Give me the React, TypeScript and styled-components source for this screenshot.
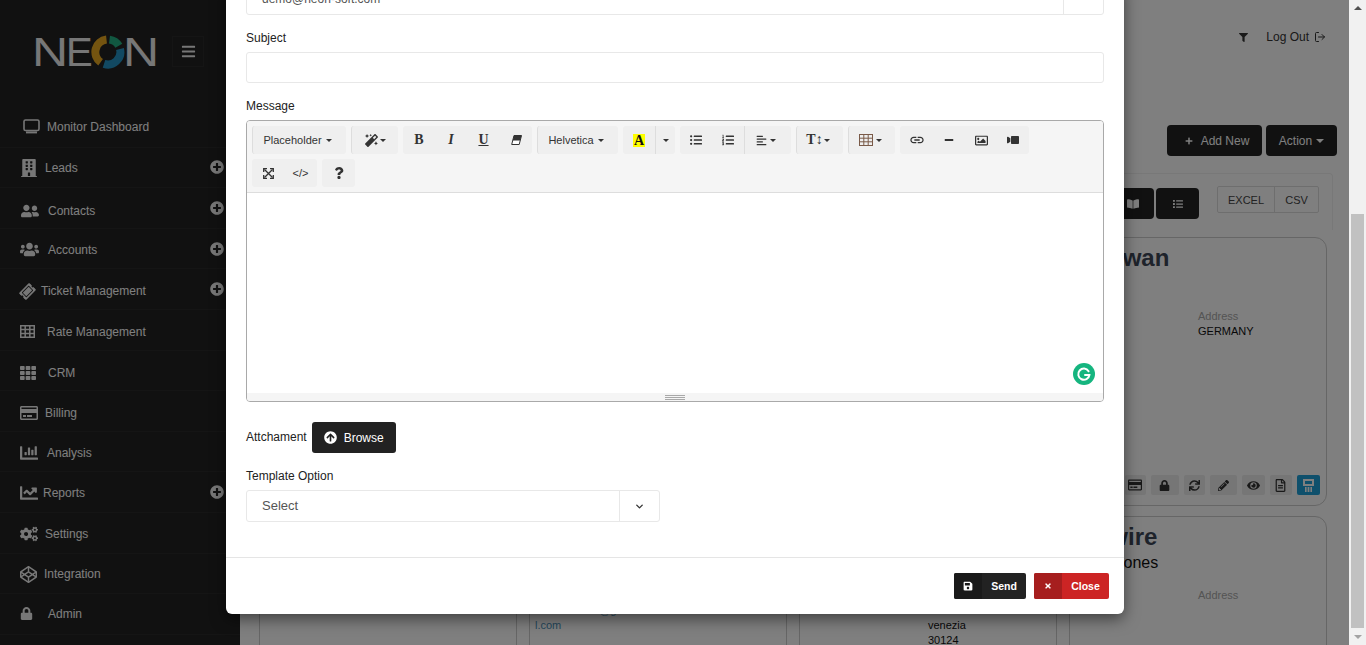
import React from "react";
import styled, { createGlobalStyle } from "styled-components";
import {
  FaAlignLeft,
  FaArrowCircleUp,
  FaBars,
  FaBookOpen,
  FaBuilding,
  FaChartBar,
  FaChartLine,
  FaCodepen,
  FaCogs,
  FaEye,
  FaFilter,
  FaList,
  FaListOl,
  FaListUl,
  FaLock,
  FaMagic,
  FaMinus,
  FaPencilAlt,
  FaPlus,
  FaPlusCircle,
  FaQuestion,
  FaRegCreditCard,
  FaRegFileAlt,
  FaRegImage,
  FaSave,
  FaSync,
  FaTh,
  FaTicketAlt,
  FaTimes,
  FaUpload,
  FaUserFriends,
  FaUsers,
  FaVideo,
} from "react-icons/fa";
import { FiChevronDown, FiLogOut } from "react-icons/fi";
import { MdLink } from "react-icons/md";

const GlobalStyle = createGlobalStyle`
  html, body {
    margin: 0;
    padding: 0;
    overflow: hidden;
    background: #fff;
    font-family: "Liberation Sans", Arial, sans-serif;
  }
  * { box-sizing: border-box; }
`;

const Screen = styled.div`
  display: flex;
  width: 1366px;
  height: 645px;
  overflow: hidden;
`;

const Stage = styled.div`
  position: relative;
  flex: 1;
  display: flex;
  min-width: 0;
  overflow: hidden;
`;

/* sidebar */
const Sidebar = styled.aside`
  width: 240px;
  flex-shrink: 0;
  background: #222;
  color: #fff;
  overflow: hidden;
`;

const LogoRow = styled.div`
  display: flex;
  align-items: center;
  height: 107px;
  padding: 0 0 4px 32px;
`;

const Logo = styled.div`
  display: flex;
  align-items: center;
  width: 140px;
  font-size: 40px;
  line-height: 40px;
  color: #eee;
`;

const LogoLetter = styled.span<{ $w: number; $stretch?: number }>`
  display: block;
  flex-shrink: 0;
  width: ${(p) => p.$w}px;
  transform: scaleX(${(p) => p.$stretch ?? 1});
  transform-origin: left center;
`;

const Burger = styled.button`
  display: flex;
  align-items: center;
  justify-content: center;
  width: 32px;
  height: 31px;
  background: transparent;
  border: 1px solid #2b2b2b;
  color: #eee;
  font-size: 15px;
  padding: 0;
`;

const NavRow = styled.div<{ $nudge?: number }>`
  display: flex;
  align-items: center;
  height: 40.6px;
  padding: ${(p) => p.$nudge ?? 0}px 16px 0 20px;
  border-bottom: 1px solid #2a2a2a;
  font-size: 12px;
  color: #fff;
`;

const NavIcon = styled.span<{ $slot: number; $size?: number; $inset?: number; $tilt?: number }>`
  display: flex;
  align-items: center;
  width: ${(p) => p.$slot}px;
  flex-shrink: 0;
  padding-left: ${(p) => p.$inset ?? 0}px;
  font-size: ${(p) => p.$size ?? 17}px;
  color: #eee;
  svg {
    transform: rotate(${(p) => p.$tilt ?? 0}deg);
  }
`;

const NavExpand = styled.span<{ $nudge?: number }>`
  display: flex;
  margin-left: auto;
  margin-top: ${(p) => -(p.$nudge ?? 0)}px;
  font-size: 14px;
  color: #eee;
`;

/* page behind the dialog */
const Main = styled.main`
  flex: 1;
  min-width: 0;
  padding: 0 12px 0 19px;
  background: #fff;
`;

const TopBar = styled.div`
  display: flex;
  align-items: center;
  justify-content: flex-end;
  gap: 18px;
  height: 74px;
  padding-right: 11px;
  font-size: 12px;
  color: #333;
`;

const LogOut = styled.span`
  display: flex;
  align-items: center;
  gap: 5px;
  font-size: 12px;
`;

const ActionRow = styled.div`
  display: flex;
  justify-content: flex-end;
  gap: 4px;
  margin-top: 51px;
`;

const DarkButton = styled.button<{ $w: number; $gap?: number; $indent?: number }>`
  display: flex;
  align-items: center;
  justify-content: center;
  gap: ${(p) => p.$gap ?? 8}px;
  width: ${(p) => p.$w}px;
  height: 31px;
  padding: 0 0 0 ${(p) => p.$indent ?? 0}px;
  border: 0;
  border-radius: 4px;
  background: #222;
  color: #fff;
  font: 12px "Liberation Sans", Arial, sans-serif;
`;

const Caret = styled.span<{ $size?: number; $color?: string }>`
  display: inline-block;
  width: 0;
  height: 0;
  border-left: ${(p) => p.$size ?? 3}px solid transparent;
  border-right: ${(p) => p.$size ?? 3}px solid transparent;
  border-top: ${(p) => p.$size ?? 3}px solid ${(p) => p.$color ?? "#333"};
`;

const Panel = styled.div`
  display: flex;
  justify-content: flex-end;
  align-items: flex-start;
  height: 57px;
  margin: 17px 4px 0 0;
  padding: 12px 13px 0 0;
  border: 1px solid #f0f0f0;
  border-bottom: 0;
  border-radius: 4px 4px 0 0;
`;

const ViewSwitch = styled.div`
  display: flex;
  gap: 2px;
  margin-top: 2px;
`;

const ExportGroup = styled.div`
  display: flex;
  height: 27px;
  margin-left: 18px;
  border: 1px solid #ddd;
  border-radius: 2px;
`;

const ExportItem = styled.span<{ $w: number }>`
  display: flex;
  align-items: center;
  justify-content: center;
  width: ${(p) => p.$w}px;
  font-size: 11px;
  color: #444;
  & + & {
    border-left: 1px solid #ddd;
  }
`;

const CardGrid = styled.div`
  display: grid;
  grid-template-columns: repeat(4, 257.5px);
  grid-auto-rows: 269px;
  column-gap: 12.5px;
  row-gap: 10px;
  margin-top: 7px;
`;

const Card = styled.article`
  display: flex;
  flex-direction: column;
  padding: 6px 6px 10px 10px;
  border: 1px solid #ccc;
  border-radius: 12px;
`;

const CardTitle = styled.h3`
  min-height: 28px;
  margin: 0;
  font-size: 24px;
  line-height: 28px;
  font-weight: bold;
  white-space: nowrap;
  color: #3d4656;
`;

const CardSubtitle = styled.div`
  height: 24px;
  font-size: 16px;
  line-height: 24px;
  color: #111;
`;

const CardBody = styled.div`
  display: grid;
  grid-template-columns: 118px 1fr;
  margin-top: 13px;
  font-size: 11px;
  line-height: 15px;
  color: #111;
`;

const FieldCaption = styled.div`
  color: #a8a8a8;
`;

const MailText = styled.div`
  margin-left: -5px;
  color: #4a90b8;
`;

const CardActions = styled.div`
  display: flex;
  justify-content: flex-end;
  gap: 5px;
  margin-top: auto;
`;

const CardAction = styled.span<{ $w: number; $on?: boolean }>`
  display: flex;
  align-items: center;
  justify-content: center;
  width: ${(p) => p.$w}px;
  height: 20px;
  border-radius: 2px;
  background: ${(p) => (p.$on ? "#1fa0d8" : "#ececec")};
  color: ${(p) => (p.$on ? "#fff" : "#333")};
`;

/* dialog */
const Backdrop = styled.div`
  position: absolute;
  inset: 0;
  display: flex;
  align-items: flex-end;
  padding: 0 0 31px 226px;
  background: rgba(0, 0, 0, 0.5);
  overflow: hidden;
`;

const Dialog = styled.div`
  width: 898px;
  flex-shrink: 0;
  background: #fff;
  border-radius: 0 0 6px 6px;
  box-shadow: 0 5px 15px rgba(0, 0, 0, 0.5);
`;

const DialogBody = styled.div`
  padding: 0 20px 35px;
`;

const Field = styled.div`
  margin-bottom: 16px;
`;

const FieldLabel = styled.label`
  display: block;
  margin-bottom: 6px;
  font-size: 12px;
  line-height: 15px;
  color: #222;
`;

const TextBox = styled.div`
  height: 31px;
  padding-left: 15px;
  border: 1px solid #e8e8e8;
  border-radius: 3px;
  background: #fff;
  font-size: 12px;
  line-height: 29px;
  color: #555;
`;

const AddonBox = styled.div`
  display: flex;
  justify-content: space-between;
  height: 31px;
  border: 1px solid #e8e8e8;
  border-radius: 3px;
  font-size: 12px;
  line-height: 29px;
  color: #555;
  padding-left: 15px;
`;

const AddonEnd = styled.div`
  width: 40px;
  border-left: 1px solid #e8e8e8;
`;

const Editor = styled.div`
  border: 1px solid #a9a9a9;
  border-radius: 4px;
  overflow: hidden;
`;

const Toolbar = styled.div`
  display: flex;
  flex-wrap: wrap;
  gap: 5px;
  height: 72px;
  padding: 5px;
  background: #f5f5f5;
  border-bottom: 1px solid #ddd;
`;

const ToolGroup = styled.div<{ $edge?: boolean }>`
  display: flex;
  height: 28px;
  border-radius: 3px;
  background: #efefef;
  border-left: ${(p) => (p.$edge ? "1px solid #ddd" : "0")};
`;

const ToolButton = styled.span<{
  $w: number;
  $divided?: boolean;
  $serif?: boolean;
  $gap?: number;
  $trim?: number;
}>`
  display: flex;
  align-items: center;
  justify-content: center;
  gap: ${(p) => p.$gap ?? 4}px;
  width: ${(p) => p.$w}px;
  height: 28px;
  padding-right: ${(p) => p.$trim ?? 0}px;
  font-size: ${(p) => (p.$serif ? 14 : 11)}px;
  font-family: ${(p) =>
    p.$serif ? '"Liberation Serif", serif' : '"Liberation Sans", Arial, sans-serif'};
  color: #333;
  border-left: ${(p) => (p.$divided ? "1px solid #ddd" : "0")};
`;

const SerifMark = styled.span<{ $italic?: boolean; $under?: boolean }>`
  font-weight: bold;
  font-style: ${(p) => (p.$italic ? "italic" : "normal")};
  text-decoration: ${(p) => (p.$under ? "underline" : "none")};
`;

const ColorMark = styled.span`
  display: block;
  width: 12px;
  height: 13px;
  background: #ff0;
  color: #111;
  font: bold 14px/13px "Liberation Serif", serif;
  text-align: center;
`;

const Mirrored = styled.span`
  display: flex;
  transform: scaleX(-1);
`;

const EditArea = styled.div`
  position: relative;
  height: 200px;
  background: #fff;
`;

const Grammarly = styled.span`
  position: absolute;
  right: 8px;
  bottom: 8px;
  display: flex;
`;

const Statusbar = styled.div`
  display: flex;
  align-items: center;
  justify-content: center;
  height: 8px;
  background: #f5f5f5;
`;

const Grabber = styled.span`
  display: block;
  width: 20px;
  height: 5px;
  border-top: 1px solid #a9a9a9;
  border-bottom: 1px solid #a9a9a9;
  background: linear-gradient(#f5f5f5 1px, #a9a9a9 1px, #a9a9a9 2px, #f5f5f5 2px);
`;

const AttachRow = styled.div`
  display: flex;
  align-items: center;
  gap: 5px;
  margin: 20px 0 16px;
  font-size: 12px;
  color: #222;
`;

const AttachLabel = styled.span`
  margin-top: -2px;
`;

const BrowseButton = styled.button`
  display: flex;
  align-items: center;
  justify-content: center;
  gap: 7px;
  width: 84px;
  height: 31px;
  padding: 0;
  border: 0;
  border-radius: 3px;
  background: #222;
  color: #fff;
  font: 12px "Liberation Sans", Arial, sans-serif;
`;

const SelectBox = styled.div`
  display: flex;
  width: 414px;
  height: 32px;
  border: 1px solid #e8e8e8;
  border-radius: 3px;
  font-size: 13px;
  color: #555;
`;

const SelectValue = styled.div`
  flex: 1;
  padding-left: 15px;
  line-height: 29px;
`;

const SelectArrow = styled.div`
  display: flex;
  align-items: center;
  justify-content: center;
  width: 40px;
  border-left: 1px solid #e8e8e8;
  font-size: 11px;
  color: #333;
`;

const DialogFooter = styled.div`
  display: flex;
  justify-content: flex-end;
  gap: 8px;
  height: 57px;
  padding: 15px 15px 0 0;
  border-top: 1px solid #e5e5e5;
`;

const FooterButton = styled.button<{ $w: number; $bg: string; $shade: string }>`
  display: flex;
  width: ${(p) => p.$w}px;
  height: 26px;
  padding: 0;
  border: 0;
  border-radius: 2px;
  overflow: hidden;
  background: ${(p) => p.$bg};
  color: #fff;
  font: bold 10.5px/26px "Liberation Sans", Arial, sans-serif;
  > span:first-child {
    background: ${(p) => p.$shade};
  }
`;

const FooterIcon = styled.span`
  display: flex;
  align-items: center;
  justify-content: center;
  width: 28px;
  height: 26px;
`;

const FooterLabel = styled.span`
  flex: 1;
  text-align: center;
`;

/* scrollbar, drawn because the page itself does not scroll */
const ScrollTrack = styled.div`
  display: flex;
  flex-direction: column;
  align-items: center;
  width: 17px;
  flex-shrink: 0;
  background: #f1f1f1;
`;

const ScrollArrow = styled.span<{ $up?: boolean }>`
  display: block;
  width: 0;
  height: 0;
  margin: 6px 0;
  border-left: 4px solid transparent;
  border-right: 4px solid transparent;
  border-bottom: ${(p) => (p.$up ? "4px solid #505050" : "0")};
  border-top: ${(p) => (p.$up ? "0" : "4px solid #a3a3a3")};
`;

const ScrollThumb = styled.div`
  width: 13px;
  height: 414px;
  margin-top: 198px;
  margin-bottom: auto;
  background: #c1c1c1;
`;

const MonitorIcon = () => (
  <svg width="17" height="15" viewBox="0 0 17 15" fill="none">
    <rect x="1" y="1" width="15" height="10.5" rx="1.5" stroke="currentColor" strokeWidth="1.6" />
    <rect x="3" y="12.4" width="11" height="2" fill="currentColor" />
  </svg>
);

const LogoDonut = () => (
  <svg width="34" height="34" viewBox="0 0 34 34" fill="none" style={{ flexShrink: 0, marginRight: -2 }}>
    <path d="M15.5 4.6A12.5 12.5 0 0 0 9.6 27.2" stroke="#e9a820" strokeWidth="8" />
    <path d="M18.5 4.6A12.5 12.5 0 0 1 27.8 10.8" stroke="#23b083" strokeWidth="8" />
    <path d="M29 14A12.5 12.5 0 0 1 13 28.9" stroke="#2493c4" strokeWidth="8" />
  </svg>
);

const RateTableIcon = () => (
  <svg width="15" height="13" viewBox="0 0 15 13" fill="none" stroke="currentColor" strokeWidth="1.5">
    <rect x="0.75" y="0.75" width="13.5" height="11.5" />
    <path d="M0.75 4.6H14.25M0.75 8.4H14.25M5.2 0.75V12.25M9.8 0.75V12.25" />
  </svg>
);

const GridIcon = () => (
  <svg width="14" height="12" viewBox="0 0 14 12" fill="none" stroke="#7a5a48" strokeWidth="1">
    <rect x="0.5" y="0.5" width="13" height="11" />
    <path d="M0.5 4.2H13.5M0.5 7.8H13.5M4.8 0.5V11.5M9.2 0.5V11.5" />
  </svg>
);

const EraserIcon = () => (
  <svg width="11" height="10" viewBox="0 0 11 10">
    <path d="M3 0.5H10.5L8.2 9.5H0.7Z" fill="#fff" stroke="#333" strokeWidth="1" />
    <path d="M3 0.5H10.5L9.2 5.5H1.7Z" fill="#333" />
  </svg>
);

const ExpandIcon = () => (
  <svg width="11" height="11" viewBox="0 0 11 11" fill="none" stroke="#333" strokeWidth="1.3">
    <path d="M1.5 1.5L9.5 9.5M9.5 1.5L1.5 9.5" />
    <path d="M0.7 4V0.7H4M7 0.7H10.3V4M10.3 7V10.3H7M4 10.3H0.7V7" />
  </svg>
);

const GrammarlyBadge = () => (
  <svg width="22" height="22" viewBox="0 0 22 22">
    <circle cx="11" cy="11" r="11" fill="#15b57f" />
    <path
      d="M15.6 8.2A5.6 5.6 0 1 0 16.4 12H12"
      fill="none"
      stroke="#fff"
      strokeWidth="2"
      strokeLinecap="round"
    />
  </svg>
);

const PrinterIcon = () => (
  <svg width="13" height="15" viewBox="0 0 13 15" fill="currentColor">
    <path d="M1 1h11v7H1z M3 3v3h7V3z" fillRule="evenodd" />
    <path d="M3 9h1.6v5H3zM5.6 9h1.8v5H5.6zM8.4 9H10v5H8.4z" />
  </svg>
);

type NavEntry = {
  label?: string;
  icon: React.ReactNode;
  slot: number;
  size?: number;
  inset?: number;
  nudge?: number;
  tilt?: number;
  expand?: boolean;
};

const navEntries: NavEntry[] = [
  { label: "Monitor Dashboard", icon: <MonitorIcon />, slot: 27, inset: 3 },
  { label: "Leads", icon: <FaBuilding />, slot: 25, size: 18, nudge: 2, expand: true },
  { label: "Contacts", icon: <FaUserFriends />, slot: 28, inset: 1, size: 18, nudge: 6, expand: true },
  { label: "Accounts", icon: <FaUsers />, slot: 28, size: 19, nudge: 2, expand: true },
  { label: "Ticket Management", icon: <FaTicketAlt />, slot: 21, size: 15, nudge: 4, tilt: -45, expand: true },
  { label: "Rate Management", icon: <RateTableIcon />, slot: 27, nudge: 4 },
  { label: "CRM", icon: <FaTh />, slot: 28, size: 16, nudge: 6 },
  { label: "Billing", icon: <FaRegCreditCard />, slot: 25, size: 18, nudge: 4 },
  { label: "Analysis", icon: <FaChartBar />, slot: 27, size: 18, nudge: 2 },
  { label: "Reports", icon: <FaChartLine />, slot: 23, size: 18, nudge: 2, expand: true },
  { label: "Settings", icon: <FaCogs />, slot: 25, size: 18, nudge: 2 },
  { label: "Integration", icon: <FaCodepen />, slot: 24, size: 17, nudge: 2 },
  { label: "Admin", icon: <FaLock />, slot: 28, size: 13 },
  { icon: <FaUpload />, slot: 28, size: 14, inset: 1 },
];

const cardActions: { w: number; on?: boolean; icon: React.ReactNode }[] = [
  { w: 21, icon: <FaRegCreditCard size={14} /> },
  { w: 28, icon: <FaLock size={11} /> },
  { w: 21, icon: <FaSync size={11} /> },
  { w: 27, icon: <FaPencilAlt size={11} /> },
  { w: 23, icon: <FaEye size={13} /> },
  { w: 22, icon: <FaRegFileAlt size={13} /> },
  { w: 23, on: true, icon: <PrinterIcon /> },
];

const App: React.FC = () => {
  return (
    <>
      <GlobalStyle />
      <Screen>
        <Stage>
          <Sidebar>
            <LogoRow>
              <Logo>
                <LogoLetter $w={34} $stretch={1.25}>
                  N
                </LogoLetter>
                <LogoLetter $w={25}>E</LogoLetter>
                <LogoDonut />
                <LogoLetter $w={33} $stretch={1.25}>
                  N
                </LogoLetter>
              </Logo>
              <Burger>
                <FaBars />
              </Burger>
            </LogoRow>
            {navEntries.map((entry, index) => (
              <NavRow key={index} $nudge={entry.nudge}>
                <NavIcon $slot={entry.slot} $size={entry.size} $inset={entry.inset} $tilt={entry.tilt}>
                  {entry.icon}
                </NavIcon>
                {entry.label}
                {entry.expand && (
                  <NavExpand $nudge={entry.nudge}>
                    <FaPlusCircle />
                  </NavExpand>
                )}
              </NavRow>
            ))}
          </Sidebar>

          <Main>
            <TopBar>
              <FaFilter size={9} />
              <LogOut>
                Log Out <FiLogOut size={12} />
              </LogOut>
            </TopBar>
            <ActionRow>
              <DarkButton $w={95} $indent={5}>
                <FaPlus size={8} /> Add New
              </DarkButton>
              <DarkButton $w={71} $gap={4}>
                Action <Caret $size={4} $color="#fff" />
              </DarkButton>
            </ActionRow>
            <Panel>
              <ViewSwitch>
                <DarkButton $w={43}>
                  <FaBookOpen size={12} />
                </DarkButton>
                <DarkButton $w={43}>
                  <FaList size={10} />
                </DarkButton>
              </ViewSwitch>
              <ExportGroup>
                <ExportItem $w={56}>EXCEL</ExportItem>
                <ExportItem $w={44}>CSV</ExportItem>
              </ExportGroup>
            </Panel>
            <CardGrid>
              <Card />
              <Card />
              <Card />
              <Card>
                <CardTitle>M Awan</CardTitle>
                <CardSubtitle />
                <CardBody>
                  <div />
                  <div>
                    <FieldCaption>Address</FieldCaption>
                    <div>GERMANY</div>
                  </div>
                </CardBody>
                <CardActions>
                  {cardActions.map((action, index) => (
                    <CardAction key={index} $w={action.w} $on={action.on}>
                      {action.icon}
                    </CardAction>
                  ))}
                </CardActions>
              </Card>
              <Card />
              <Card>
                <CardTitle />
                <CardSubtitle />
                <CardBody>
                  <div>
                    <FieldCaption>Email</FieldCaption>
                    <MailText>contact.sales@gmai</MailText>
                    <MailText>l.com</MailText>
                  </div>
                </CardBody>
              </Card>
              <Card>
                <CardTitle />
                <CardSubtitle />
                <CardBody>
                  <div />
                  <div>
                    <FieldCaption>Address</FieldCaption>
                    <div>Via Roma</div>
                    <div>venezia</div>
                    <div>30124</div>
                  </div>
                </CardBody>
              </Card>
              <Card>
                <CardTitle>Sawire</CardTitle>
                <CardSubtitle>Mrs. Jones</CardSubtitle>
                <CardBody>
                  <div />
                  <FieldCaption>Address</FieldCaption>
                </CardBody>
              </Card>
            </CardGrid>
          </Main>

          <Backdrop>
            <Dialog>
              <DialogBody>
                <Field>
                  <AddonBox>
                    demo@neon-soft.com
                    <AddonEnd />
                  </AddonBox>
                </Field>
                <Field>
                  <FieldLabel>Subject</FieldLabel>
                  <TextBox />
                </Field>
                <FieldLabel>Message</FieldLabel>
                <Editor>
                  <Toolbar>
                    <ToolGroup $edge>
                      <ToolButton $w={93} $trim={4}>
                        Placeholder <Caret />
                      </ToolButton>
                    </ToolGroup>
                    <ToolGroup $edge>
                      <ToolButton $w={46} $gap={2}>
                        <FaMagic size={13} /> <Caret />
                      </ToolButton>
                    </ToolGroup>
                    <ToolGroup>
                      <ToolButton $w={32} $serif>
                        <SerifMark>B</SerifMark>
                      </ToolButton>
                      <ToolButton $w={32} $serif>
                        <SerifMark $italic>I</SerifMark>
                      </ToolButton>
                      <ToolButton $w={33} $serif>
                        <SerifMark $under>U</SerifMark>
                      </ToolButton>
                      <ToolButton $w={32}>
                        <EraserIcon />
                      </ToolButton>
                    </ToolGroup>
                    <ToolGroup $edge>
                      <ToolButton $w={80} $trim={4}>
                        Helvetica <Caret />
                      </ToolButton>
                    </ToolGroup>
                    <ToolGroup>
                      <ToolButton $w={32}>
                        <ColorMark>A</ColorMark>
                      </ToolButton>
                      <ToolButton $w={20} $divided>
                        <Caret />
                      </ToolButton>
                    </ToolGroup>
                    <ToolGroup>
                      <ToolButton $w={32}>
                        <FaListUl size={12} />
                      </ToolButton>
                      <ToolButton $w={32}>
                        <FaListOl size={12} />
                      </ToolButton>
                      <ToolButton $w={47} $divided $gap={3} $trim={5}>
                        <FaAlignLeft size={11} /> <Caret />
                      </ToolButton>
                    </ToolGroup>
                    <ToolGroup $edge>
                      <ToolButton $w={46} $serif $gap={1} $trim={4}>
                        <SerifMark>T↕</SerifMark> <Caret />
                      </ToolButton>
                    </ToolGroup>
                    <ToolGroup $edge>
                      <ToolButton $w={46} $gap={3} $trim={4}>
                        <GridIcon /> <Caret />
                      </ToolButton>
                    </ToolGroup>
                    <ToolGroup>
                      <ToolButton $w={33}>
                        <MdLink size={16} />
                      </ToolButton>
                      <ToolButton $w={32}>
                        <FaMinus size={10} />
                      </ToolButton>
                      <ToolButton $w={32}>
                        <FaRegImage size={13} />
                      </ToolButton>
                      <ToolButton $w={32}>
                        <Mirrored>
                          <FaVideo size={12} />
                        </Mirrored>
                      </ToolButton>
                    </ToolGroup>
                    <ToolGroup>
                      <ToolButton $w={32}>
                        <ExpandIcon />
                      </ToolButton>
                      <ToolButton $w={33}>&lt;/&gt;</ToolButton>
                    </ToolGroup>
                    <ToolGroup>
                      <ToolButton $w={33}>
                        <FaQuestion size={12} />
                      </ToolButton>
                    </ToolGroup>
                  </Toolbar>
                  <EditArea>
                    <Grammarly>
                      <GrammarlyBadge />
                    </Grammarly>
                  </EditArea>
                  <Statusbar>
                    <Grabber />
                  </Statusbar>
                </Editor>
                <AttachRow>
                  <AttachLabel>Attchament</AttachLabel>
                  <BrowseButton>
                    <FaArrowCircleUp size={13} /> Browse
                  </BrowseButton>
                </AttachRow>
                <FieldLabel>Template Option</FieldLabel>
                <SelectBox>
                  <SelectValue>Select</SelectValue>
                  <SelectArrow>
                    <FiChevronDown strokeWidth={3} />
                  </SelectArrow>
                </SelectBox>
              </DialogBody>
              <DialogFooter>
                <FooterButton $w={72} $bg="#222" $shade="#1a1a1a">
                  <FooterIcon>
                    <FaSave size={10} />
                  </FooterIcon>
                  <FooterLabel>Send</FooterLabel>
                </FooterButton>
                <FooterButton $w={75} $bg="#cc2424" $shade="#a61e1e">
                  <FooterIcon>
                    <FaTimes size={8} />
                  </FooterIcon>
                  <FooterLabel>Close</FooterLabel>
                </FooterButton>
              </DialogFooter>
            </Dialog>
          </Backdrop>
        </Stage>
        <ScrollTrack>
          <ScrollArrow $up />
          <ScrollThumb />
          <ScrollArrow />
        </ScrollTrack>
      </Screen>
    </>
  );
};

export default App;
